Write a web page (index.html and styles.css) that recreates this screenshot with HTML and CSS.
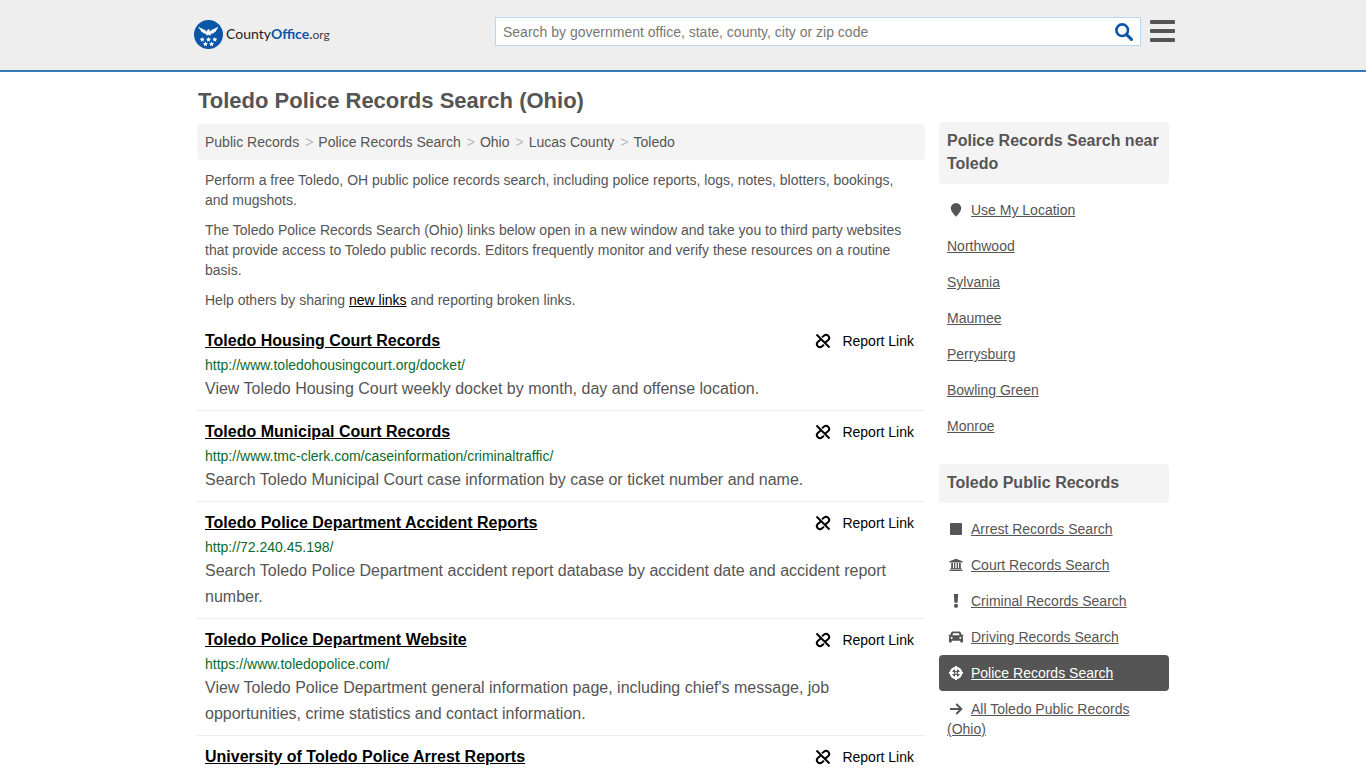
FILE: index.html
```html
<!DOCTYPE html>
<html lang="en">
<head>
    <meta charset="UTF-8">
    <meta name="viewport" content="width=device-width, initial-scale=1.0">
    <title>Toledo Police Records Search (Ohio)</title>
    <link rel="stylesheet" href="styles.css">
</head>
<body>
    <!-- shared icon -->
    <svg class="sprite" aria-hidden="true">
        <symbol id="unlink" viewBox="0 0 16 16">
            <g fill="none" stroke="currentColor" stroke-width="2">
                <path d="M1.500 1.500l13 13"/>
                <path d="M7 4.300l1.900-1.500a3 3 0 0 1 4.300 4.200L10 9.700"/>
                <path d="M9 11.700l-1.900 1.500a3 3 0 0 1-4.300-4.200L6 6.300"/>
            </g>
        </symbol>
    </svg>

    <header>
        <div class="header-inner">
            <a class="logo" href="#">
                <svg width="29" height="29" viewBox="0 0 29 29" aria-hidden="true">
                    <circle cx="14.500" cy="14.500" r="14.500" fill="#0b56a8"/>
                    <g fill="#fff">
                        <path d="M4.300 6.800c2.300 1.600 4.700 2 6.600 3.200.9.600 1.500 1.200 2.100 1.800l.4-2.100 1.700-.6.600.8-.2 1.900c.6-.6 1.200-1.200 2.100-1.800 1.900-1.200 4.300-1.600 6.600-3.200-.3 1.500-1 2.500-1.800 3.200-.2 1.200-.9 1.900-1.900 2.300-.6.900-1.500 1.400-2.700 1.400l-1.400.2.800 1.700-2.700-.7-2.700.7.800-1.700-1.400-.2c-1.200 0-2.100-.5-2.700-1.400-1-.4-1.700-1.100-1.900-2.300-.9-.7-1.800-1.700-2.300-3.200z"/>
                        <path id="star" d="M8.200 16.900l.7 1.600 1.800.2-1.300 1.200.4 1.800-1.600-.9-1.600.9.400-1.800-1.300-1.200 1.800-.2z"/>
                        <use href="#star" x="6.300"/>
                        <use href="#star" x="12.600"/>
                        <use href="#star" x="3.200" y="4.500"/>
                        <use href="#star" x="9.400" y="4.500"/>
                    </g>
                </svg>
                <span class="logo-text">County<b>Office</b>.<small>org</small></span>
            </a>
            <form class="search">
                <input type="text" aria-label="Search" placeholder="Search by government office, state, county, city or zip code">
                <button type="button" aria-label="Search">
                    <svg width="18" height="18" viewBox="0 0 18 18" aria-hidden="true">
                        <circle cx="7.200" cy="7.200" r="5.800" fill="none" stroke="#0b56a8" stroke-width="2.600"/>
                        <path d="M11.400 11.400l5 5" stroke="#0b56a8" stroke-width="3" stroke-linecap="round"/>
                    </svg>
                </button>
            </form>
            <button class="menu" type="button" aria-label="Menu"><span></span><span></span><span></span></button>
        </div>
    </header>

    <div class="container">
        <main>
            <h1>Toledo Police Records Search (Ohio)</h1>
            <nav class="breadcrumb" aria-label="Breadcrumb">
                <a href="#">Public Records</a><i>&gt;</i><a href="#">Police Records Search</a><i>&gt;</i><a href="#">Ohio</a><i>&gt;</i><a href="#">Lucas County</a><i>&gt;</i><a href="#">Toledo</a>
            </nav>
            <div class="intro">
                <p>Perform a free Toledo, OH public police records search, including police reports, logs, notes, blotters, bookings, and mugshots.</p>
                <p>The Toledo Police Records Search (Ohio) links below open in a new window and take you to third party websites that provide access to Toledo public records. Editors frequently monitor and verify these resources on a routine basis.</p>
                <p>Help others by sharing <a href="#">new links</a> and reporting broken links.</p>
            </div>

            <div class="result">
                <div class="result-top">
                    <h2><a href="#">Toledo Housing Court Records</a></h2>
                    <a class="report" href="#"><svg width="16" height="16"><use href="#unlink"/></svg>Report Link</a>
                </div>
                <div class="url">http://www.toledohousingcourt.org/docket/</div>
                <p>View Toledo Housing Court weekly docket by month, day and offense location.</p>
            </div>
            <div class="result">
                <div class="result-top">
                    <h2><a href="#">Toledo Municipal Court Records</a></h2>
                    <a class="report" href="#"><svg width="16" height="16"><use href="#unlink"/></svg>Report Link</a>
                </div>
                <div class="url">http://www.tmc-clerk.com/caseinformation/criminaltraffic/</div>
                <p>Search Toledo Municipal Court case information by case or ticket number and name.</p>
            </div>
            <div class="result">
                <div class="result-top">
                    <h2><a href="#">Toledo Police Department Accident Reports</a></h2>
                    <a class="report" href="#"><svg width="16" height="16"><use href="#unlink"/></svg>Report Link</a>
                </div>
                <div class="url">http://72.240.45.198/</div>
                <p>Search Toledo Police Department accident report database by accident date and accident report number.</p>
            </div>
            <div class="result">
                <div class="result-top">
                    <h2><a href="#">Toledo Police Department Website</a></h2>
                    <a class="report" href="#"><svg width="16" height="16"><use href="#unlink"/></svg>Report Link</a>
                </div>
                <div class="url">https://www.toledopolice.com/</div>
                <p>View Toledo Police Department general information page, including chief's message, job opportunities, crime statistics and contact information.</p>
            </div>
            <div class="result">
                <div class="result-top">
                    <h2><a href="#">University of Toledo Police Arrest Reports</a></h2>
                    <a class="report" href="#"><svg width="16" height="16"><use href="#unlink"/></svg>Report Link</a>
                </div>
            </div>
        </main>

        <aside>
            <h3>Police Records Search near Toledo</h3>
            <ul>
                <li><svg class="icon" viewBox="0 0 18 14"><path d="M9 0a5.200 5.200 0 0 1 5.200 5.200c0 2.500-2.200 5.200-5.200 8.600-3-3.400-5.200-6.100-5.200-8.600A5.200 5.200 0 0 1 9 0z"/></svg><a href="#">Use My Location</a></li>
                <li><a href="#">Northwood</a></li>
                <li><a href="#">Sylvania</a></li>
                <li><a href="#">Maumee</a></li>
                <li><a href="#">Perrysburg</a></li>
                <li><a href="#">Bowling Green</a></li>
                <li><a href="#">Monroe</a></li>
            </ul>
            <h3>Toledo Public Records</h3>
            <ul>
                <li><svg class="icon" viewBox="0 0 18 14"><rect x="3" y="1" width="12" height="12" rx="1"/></svg><a href="#">Arrest Records Search</a></li>
                <li><svg class="icon" viewBox="0 0 18 14"><path d="M9 .8l6.500 2.400v1.300h-13V3.200zM4.200 5h1.800v5.300H4.200zM7 5h1.300v5.300H7zM9.700 5H11v5.300H9.700zM12 5h1.800v5.300H12zM3.400 10.300h11.200v1H3.400zM2.500 11.800h13v1.200h-13z"/></svg><a href="#">Court Records Search</a></li>
                <li><svg class="icon" viewBox="0 0 18 14"><path d="M6.800 0h4.400l-.6 8.700H7.400z"/><circle cx="9" cy="11.800" r="2.100"/></svg><a href="#">Criminal Records Search</a></li>
                <li><svg class="icon" viewBox="0 0 18 14"><path fill-rule="evenodd" d="M6.200 1.500h5.600c1.100 0 1.800.5 2.200 1.500l.7 1.700h1.600v1.200h-1c.5.500.7 1 .7 1.700v3.900c0 .6-.3.900-.9.900h-1c-.6 0-.9-.3-.9-.9v-.8H4.800v.8c0 .6-.3.900-.9.900h-1c-.6 0-.9-.3-.9-.9V7.600c0-.7.200-1.200.7-1.700h-1V4.700h1.600L4 3c.4-1 1.100-1.500 2.200-1.500zM6.200 3.300L5.400 5.200h7.200l-.8-1.900zM4.700 7a1 1 0 1 0 0 2 1 1 0 0 0 0-2zM13.300 7a1 1 0 1 0 0 2 1 1 0 0 0 0-2z"/></svg><a href="#">Driving Records Search</a></li>
                <li class="active"><svg class="icon" viewBox="0 0 18 14"><circle cx="9" cy="7" r="5" fill="none" stroke="currentColor" stroke-width="2.400"/><path d="M8 0h2v14H8zM2 6h14v2H2z"/><path class="hole" d="M6.500 5.700h5M6.500 8.300h5M7.700 4.500v5M10.300 4.500v5"/></svg><a href="#">Police Records Search</a></li>
                <li><svg class="icon" viewBox="0 0 18 14"><path d="M3 7h11M9.300 2l5 5-5 5" fill="none" stroke="currentColor" stroke-width="2"/></svg><a href="#">All Toledo Public Records (Ohio)</a></li>
            </ul>
        </aside>
    </div>
</body>
</html>
```

FILE: styles.css
```css
* {
    box-sizing: border-box;
}
body {
    font-family: "Liberation Sans", Arial, sans-serif;
    font-size: 14px;
    line-height: 20px;
    margin: 0;
    color: #555;
    background: #fff;
}
a {
    color: inherit;
}
.sprite {
    display: none;
}
header {
    background: #eee;
    border-bottom: 2px solid #337ab7;
}
.header-inner {
    display: flex;
    align-items: flex-start;
    max-width: 984px;
    height: 70px;
    margin: 0 auto;
    padding: 17px 0 0 3px;
}
.logo {
    display: flex;
    align-items: center;
    gap: 3px;
    padding-top: 3px;
    color: #222;
    text-decoration: none;
}
.logo-text {
    font-family: Lato, sans-serif;
    font-size: 14px;
}
.logo-text b {
    color: #0b56a8;
}
.logo-text small {
    font-size: 12px;
    color: #444;
}
.search {
    display: flex;
    flex: 0 1 646px;
    height: 29px;
    margin-left: auto;
    background: #fff;
    border: 1px solid #bcd6ec;
}
.search input {
    flex: 1;
    min-width: 0;
    padding: 0 7px;
    border: 0;
    outline: 0;
    background: none;
    font: inherit;
}
.search input::placeholder {
    color: #777;
}
.search button {
    display: flex;
    align-items: center;
    padding: 0 7px;
    border: 0;
    background: none;
}
.menu {
    display: flex;
    flex-direction: column;
    gap: 5px;
    width: 25px;
    margin: 3px 0 0 9px;
    padding: 0;
    border: 0;
    background: none;
}
.menu span {
    width: 100%;
    height: 4px;
    border-radius: 1px;
    background: #555;
}
.container {
    display: flex;
    gap: 14px;
    max-width: 972px;
    margin: 0 auto;
}
main {
    flex: 1;
    min-width: 0;
}
h1 {
    margin: 0;
    padding: 15px 0 9px 1px;
    font-size: 22px;
    line-height: 28px;
}
.breadcrumb {
    padding: 8px;
    border-radius: 4px;
    background: #f4f4f4;
}
.breadcrumb a {
    text-decoration: none;
}
.breadcrumb i {
    padding: 0 5px 0 6px;
    color: #bbb;
    font-style: normal;
}
.intro {
    padding: 0 8px;
}
.intro p {
    margin: 10px 0;
}
.intro a {
    color: #000;
}
.result {
    padding: 8px;
    border-bottom: 1px solid #eee;
}
.result-top {
    display: flex;
    justify-content: space-between;
    color: #000;
}
h2 {
    margin: 0;
    font-size: 16px;
    line-height: 26px;
}
.report {
    display: flex;
    align-items: center;
    gap: 11px;
    padding-right: 3px;
    text-decoration: none;
}
.url {
    color: #0a6b2c;
    line-height: 22px;
}
.result p {
    margin: 0;
    font-size: 16px;
    line-height: 26px;
}
aside {
    width: 230px;
    padding-top: 50px;
}
h3 {
    margin: 0;
    padding: 7px 8px 9px;
    border-radius: 4px;
    background: #f4f4f4;
    font-size: 16px;
    line-height: 23px;
}
ul {
    margin: 8px 0 20px;
    padding: 0;
    list-style: none;
}
li {
    padding: 8px;
    border-radius: 4px;
}
li.active {
    background: #555;
    color: #fff;
}
.icon {
    width: 18px;
    height: 14px;
    margin-right: 6px;
    vertical-align: -2px;
    fill: currentColor;
}
.icon .hole {
    fill: none;
    stroke: #555;
    stroke-width: 1;
}
```
